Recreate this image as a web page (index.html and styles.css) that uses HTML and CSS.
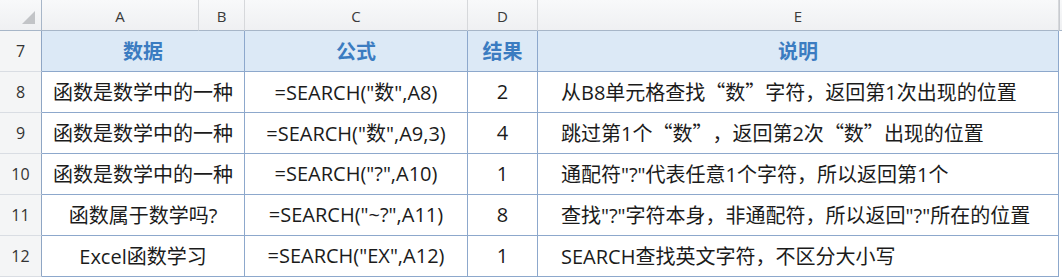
FILE: index.html
```html
<!DOCTYPE html>
<html lang="zh-CN">
<head>
<meta charset="utf-8">
<link rel="stylesheet" href="styles.css">
</head>
<body>
<div class="sheet">
  <div class="ch corner"><span class="tri"></span></div>
  <div class="ch">A</div>
  <div class="ch">B</div>
  <div class="ch">C</div>
  <div class="ch">D</div>
  <div class="ch">E</div>
  <div class="ch end"></div>

  <div class="rh">7</div>
  <div class="cell head span2">数据</div>
  <div class="cell head">公式</div>
  <div class="cell head">结果</div>
  <div class="cell head">说明</div>
  <div class="gap"></div>

  <div class="rh">8</div>
  <div class="cell span2">函数是数学中的一种</div>
  <div class="cell">=SEARCH("数",A8)</div>
  <div class="cell">2</div>
  <div class="cell left">从B8单元格查找<span class="cj">“数”</span>字符，返回第1次出现的位置</div>
  <div class="gap"></div>

  <div class="rh">9</div>
  <div class="cell span2">函数是数学中的一种</div>
  <div class="cell">=SEARCH("数",A9,3)</div>
  <div class="cell">4</div>
  <div class="cell left">跳过第1个<span class="cj">“数”</span>，返回第2次<span class="cj">“数”</span>出现的位置</div>
  <div class="gap"></div>

  <div class="rh">10</div>
  <div class="cell span2">函数是数学中的一种</div>
  <div class="cell">=SEARCH("?",A10)</div>
  <div class="cell">1</div>
  <div class="cell left">通配符"?"代表任意1个字符，所以返回第1个</div>
  <div class="gap"></div>

  <div class="rh">11</div>
  <div class="cell span2">函数属于数学吗?</div>
  <div class="cell">=SEARCH("~?",A11)</div>
  <div class="cell">8</div>
  <div class="cell left">查找"?"字符本身，非通配符，所以返回"?"所在的位置</div>
  <div class="gap"></div>

  <div class="rh">12</div>
  <div class="cell span2">Excel函数学习</div>
  <div class="cell">=SEARCH("EX",A12)</div>
  <div class="cell">1</div>
  <div class="cell left">SEARCH查找英文字符，不区分大小写</div>
  <div class="gap"></div>
</div>
</body>
</html>
```
FILE: styles.css
```css
* { box-sizing: border-box; }
html, body { margin: 0; padding: 0; background: #ffffff; }
body {
  font-family: "Open Sans", "Noto Sans CJK SC", sans-serif;
  color: #1b1b1b;
}
.sheet {
  display: grid;
  grid-template-columns: 42px 157px 46px 223px 70px 521px 3px;
  grid-template-rows: 31px repeat(6, 41px);
  width: 1062px;
}
.ch {
  background: linear-gradient(#f8f9fa, #eff0f2);
  border-right: 1px solid #d6d8db;
  border-bottom: 1px solid #a7b6c8;
  display: flex;
  align-items: center;
  justify-content: center;
  font-size: 15px;
  color: #3a3a3a;
  padding-top: 1px;
}
.ch.corner {
  position: relative;
  border-right: 1px solid #a7b6c8;
}
.ch.end { border-right: none; border-left: 1px solid #c8cbd0; }
.tri {
  position: absolute;
  right: 6px;
  bottom: 6px;
  width: 0;
  height: 0;
  border-left: 13px solid transparent;
  border-bottom: 13px solid #c2c4c7;
}
.rh {
  background: #f4f5f6;
  border-right: 1px solid #8fa6c4;
  border-bottom: 1px solid #d9dde3;
  display: flex;
  align-items: center;
  justify-content: center;
  font-size: 16px;
  color: #333333;
}
.cell {
  border-right: 1px solid #8da8cc;
  border-bottom: 1px solid #8da8cc;
  display: flex;
  align-items: center;
  justify-content: center;
  font-size: 20px;
  white-space: nowrap;
  padding-bottom: 1px;
}
.span2 { grid-column: span 2; }
.head {
  background: #dce9f6;
  color: #3b7cc1;
  font-weight: 700;
}
.left {
  justify-content: flex-start;
  padding-left: 23px;
}
.cj { font-family: "Noto Sans CJK SC", sans-serif; }
.gap { background: #ffffff; }
```
